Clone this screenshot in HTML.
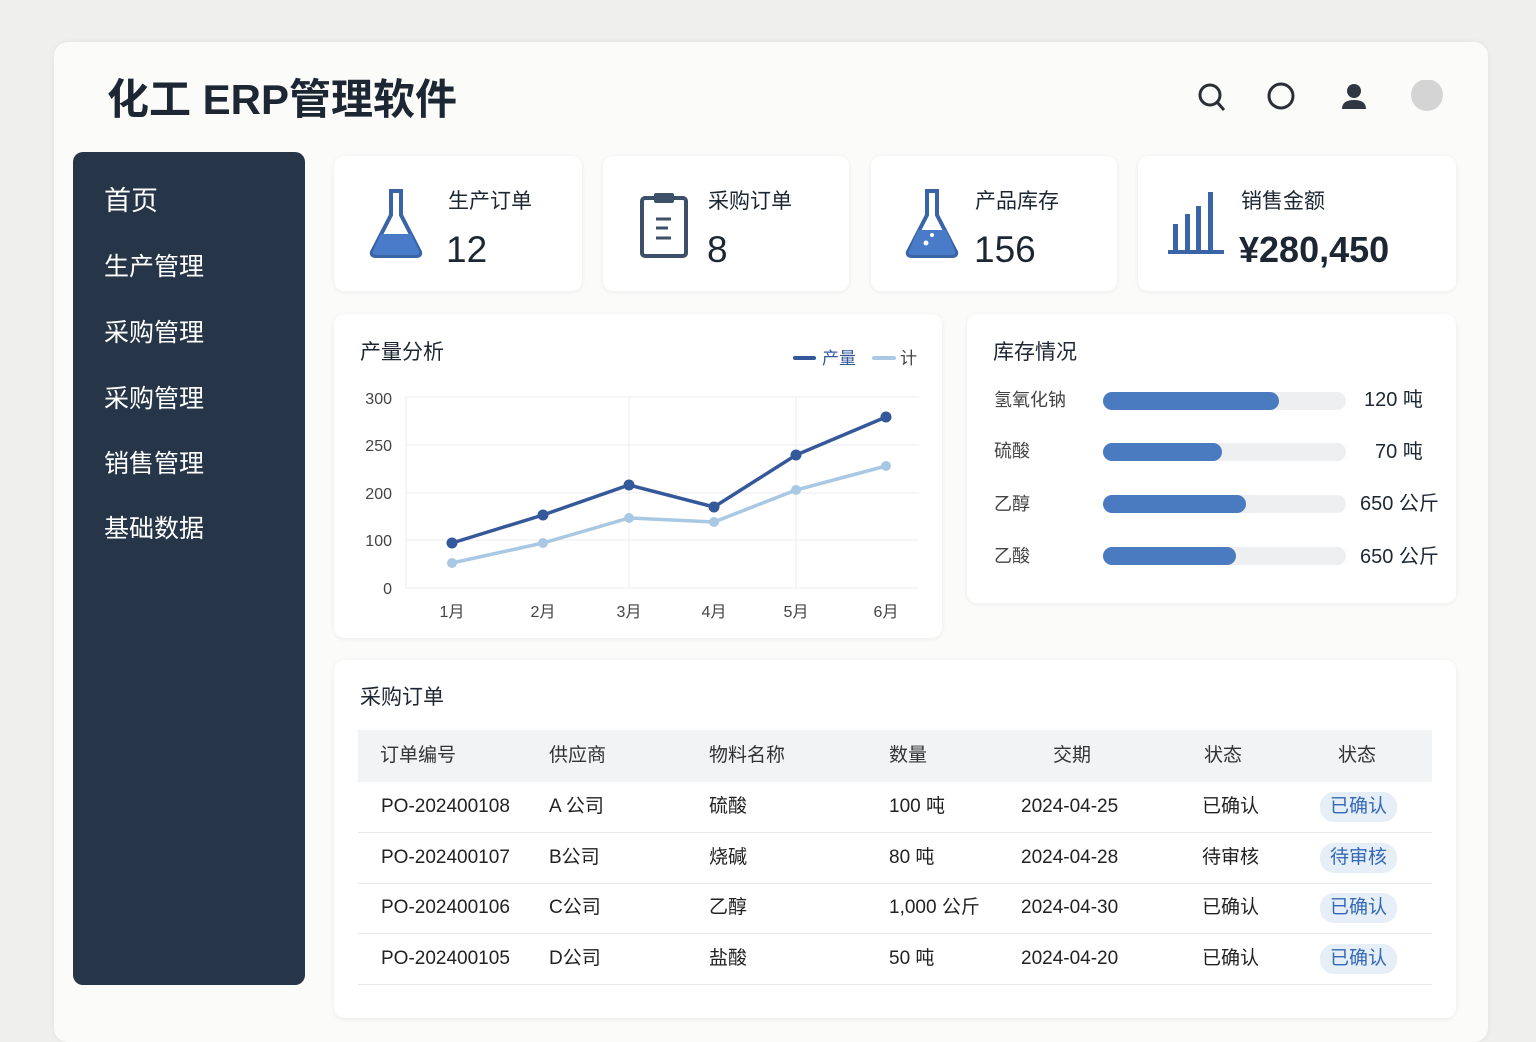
<!DOCTYPE html>
<html><head><meta charset="utf-8"><style>
*{margin:0;padding:0;box-sizing:border-box}
body{width:1536px;height:1024px;background:#efefee;font-family:"Liberation Sans","Noto Sans CJK SC",sans-serif;color:#1d2733;position:relative;overflow:hidden}
.main{position:absolute;left:54px;top:42px;width:1434px;height:1000px;background:#fbfbfa;border-radius:14px;box-shadow:0 0 6px rgba(0,0,0,.06)}
.abs{position:absolute}
.title{left:107px;top:74px;font-size:42px;font-weight:bold;color:#1c2733;line-height:52px}
.side{left:73px;top:152px;width:232px;height:833px;background:#263547;border-radius:10px}
.side div{position:absolute;left:31px;color:#fff;font-size:25px;line-height:30px}
.card{position:absolute;background:#fff;border-radius:10px;box-shadow:0 1px 5px rgba(0,0,0,.07)}
.lbl{font-size:21px;color:#1d2733;line-height:26px}
.num{font-size:37px;color:#1d2733;line-height:44px}
table{border-collapse:collapse;position:absolute;left:358px;top:730px;width:1074px;font-size:19px}
th{height:52px;background:#f2f3f4;font-weight:normal;text-align:left;color:#333;line-height:22px}
td{height:50.5px;border-bottom:1px solid #e6e8ea;color:#222;line-height:22px;vertical-align:middle}
.badge{display:inline-block;background:#e6eef8;color:#3469b4;border-radius:14px;padding:4px 10px}
.bar{position:absolute;left:1103px;height:18px;width:243px;background:#eeeff1;border-radius:9px}
.bar i{display:block;height:18px;background:#4a7bc0;border-radius:9px}
</style></head><body>
<div class="main"></div>
<div class="abs title">化工 ERP管理软件</div>
<svg class="abs" style="left:1195px;top:80px" width="260" height="36">
<circle cx="15" cy="15" r="10" fill="none" stroke="#2a2f36" stroke-width="3"/><line x1="22" y1="22" x2="29" y2="30" stroke="#2a2f36" stroke-width="3"/>
<circle cx="86" cy="16" r="12" fill="none" stroke="#2a2f36" stroke-width="3"/>
<circle cx="159" cy="11" r="7" fill="#2e3742"/><path d="M147 29 q0-9 12-9 q12 0 12 9 v0 h-24z" fill="#2e3742"/>
<circle cx="232" cy="15" r="16" fill="#d4d4d4"/>
</svg>
<div class="abs side">
<div style="top:34px;font-size:27px">首页</div>
<div style="top:100px">生产管理</div>
<div style="top:166px">采购管理</div>
<div style="top:232px">采购管理</div>
<div style="top:297px">销售管理</div>
<div style="top:362px">基础数据</div>
</div>
<div class="card" style="left:334px;top:156px;width:248px;height:135px"></div>
<div class="card" style="left:603px;top:156px;width:246px;height:135px"></div>
<div class="card" style="left:871px;top:156px;width:246px;height:135px"></div>
<div class="card" style="left:1138px;top:156px;width:318px;height:135px"></div>
<svg class="abs" style="left:366px;top:188px" width="64" height="72"><path d="M23 3h14M25 3v24L6 64q-1 4 4 4h40q5 0 4-4L35 27V3" fill="#fff" stroke="#3a64a8" stroke-width="4"/><path d="M15 46h30l8 17q1 4-3 4H10q-4 0-3-4z" fill="#4a7bc8"/></svg>
<svg class="abs" style="left:639px;top:190px" width="52" height="70"><rect x="3" y="8" width="44" height="58" rx="3" fill="#fff" stroke="#3c5068" stroke-width="4"/><rect x="15" y="3" width="20" height="10" rx="2" fill="#3c5068"/><path d="M17 29h15M17 38h12M17 48h15" stroke="#3c5068" stroke-width="3"/></svg>
<svg class="abs" style="left:902px;top:188px" width="64" height="72"><path d="M23 3h14M25 3v24L6 64q-1 4 4 4h40q5 0 4-4L35 27V3" fill="#fff" stroke="#3a64a8" stroke-width="4"/><path d="M16 42h28l9 21q1 4-3 4H10q-4 0-3-4z" fill="#4a7bc8"/><circle cx="24" cy="55" r="2.5" fill="#fff"/><circle cx="30" cy="47" r="2" fill="#fff"/></svg>
<svg class="abs" style="left:1166px;top:190px" width="60" height="66"><path d="M2 62h56" stroke="#3a64a8" stroke-width="4"/><rect x="7" y="34" width="5" height="26" fill="#3a64a8"/><rect x="19" y="24" width="5" height="36" fill="#3a64a8"/><rect x="30" y="16" width="5" height="44" fill="#3a64a8"/><rect x="42" y="2" width="5" height="58" fill="#3a64a8"/></svg>
<div class="abs lbl" style="left:448px;top:189px">生产订单</div><div class="abs num" style="left:446px;top:228px">12</div>
<div class="abs lbl" style="left:708px;top:189px">采购订单</div><div class="abs num" style="left:707px;top:228px">8</div>
<div class="abs lbl" style="left:975px;top:189px">产品库存</div><div class="abs num" style="left:974px;top:228px">156</div>
<div class="abs lbl" style="left:1241px;top:189px">销售金额</div><div class="abs num" style="left:1239px;top:228px;font-weight:bold;font-size:36px">¥280,450</div>
<div class="card" style="left:334px;top:314px;width:608px;height:324px"></div>
<div class="abs" style="left:360px;top:340px;font-size:21px;line-height:26px">产量分析</div>
<svg class="abs" style="left:334px;top:314px" width="608" height="324" font-family="Liberation Sans, Noto Sans CJK SC, sans-serif" font-size="16" fill="#444">
<line x1="461" y1="44" x2="480" y2="44" stroke="#34589a" stroke-width="4" stroke-linecap="round"/><text x="488" y="50" fill="#34589a" font-size="17">产量</text>
<line x1="540" y1="44" x2="560" y2="44" stroke="#a9c8e4" stroke-width="4" stroke-linecap="round"/><text x="566" y="50" font-size="17">计</text>
<g stroke="#eceef0"><line x1="72" y1="83" x2="585" y2="83"/><line x1="72" y1="131" x2="585" y2="131"/><line x1="72" y1="179" x2="585" y2="179"/><line x1="72" y1="226" x2="585" y2="226"/><line x1="72" y1="274" x2="585" y2="274"/><line x1="72" y1="83" x2="72" y2="274"/><line x1="295" y1="83" x2="295" y2="274"/><line x1="462" y1="83" x2="462" y2="274"/></g>
<g text-anchor="end"><text x="58" y="90">300</text><text x="58" y="137">250</text><text x="58" y="185">200</text><text x="58" y="232">100</text><text x="58" y="280">0</text></g>
<g text-anchor="middle"><text x="118" y="303">1月</text><text x="209" y="303">2月</text><text x="295" y="303">3月</text><text x="380" y="303">4月</text><text x="462" y="303">5月</text><text x="552" y="303">6月</text></g>
<polyline points="118,249 209,229 295,204 380,208 462,176 552,152" fill="none" stroke="#a9c8e4" stroke-width="3.5"/>
<g fill="#a9c8e4"><circle cx="118" cy="249" r="5"/><circle cx="209" cy="229" r="5"/><circle cx="295" cy="204" r="5"/><circle cx="380" cy="208" r="5"/><circle cx="462" cy="176" r="5"/><circle cx="552" cy="152" r="5"/></g>
<polyline points="118,229 209,201 295,171 380,193 462,141 552,103" fill="none" stroke="#34589a" stroke-width="3.5"/>
<g fill="#34589a"><circle cx="118" cy="229" r="5.5"/><circle cx="209" cy="201" r="5.5"/><circle cx="295" cy="171" r="5.5"/><circle cx="380" cy="193" r="5.5"/><circle cx="462" cy="141" r="5.5"/><circle cx="552" cy="103" r="5.5"/></g>
</svg>
<div class="card" style="left:967px;top:314px;width:489px;height:289px"></div>
<div class="abs" style="left:993px;top:340px;font-size:21px;line-height:26px">库存情况</div>
<div class="abs" style="left:994px;top:389px;font-size:18px;color:#444;line-height:22px">氢氧化钠</div>
<div class="abs" style="left:994px;top:440px;font-size:18px;color:#444;line-height:22px">硫酸</div>
<div class="abs" style="left:994px;top:493px;font-size:18px;color:#444;line-height:22px">乙醇</div>
<div class="abs" style="left:994px;top:545px;font-size:18px;color:#444;line-height:22px">乙酸</div>
<div class="bar" style="top:392px"><i style="width:176px"></i></div>
<div class="bar" style="top:443px"><i style="width:119px"></i></div>
<div class="bar" style="top:495px"><i style="width:143px"></i></div>
<div class="bar" style="top:547px"><i style="width:133px"></i></div>
<div class="abs" style="left:1364px;top:388px;font-size:20px;line-height:24px">120 吨</div>
<div class="abs" style="left:1375px;top:440px;font-size:20px;line-height:24px">70 吨</div>
<div class="abs" style="left:1360px;top:492px;font-size:20px;line-height:24px">650 公斤</div>
<div class="abs" style="left:1360px;top:545px;font-size:20px;line-height:24px">650 公斤</div>
<div class="card" style="left:334px;top:660px;width:1122px;height:358px"></div>
<div class="abs" style="left:360px;top:685px;font-size:21px;line-height:26px">采购订单</div>
<table>
<colgroup><col style="width:191px"><col style="width:160px"><col style="width:180px"><col style="width:132px"><col style="width:181px"><col style="width:118px"><col></colgroup>
<tr><th style="padding-left:22px">订单编号</th><th>供应商</th><th>物料名称</th><th>数量</th><th style="padding-left:32px">交期</th><th style="padding-left:2px">状态</th><th style="padding-left:18px">状态</th></tr>
<tr><td style="padding-left:23px">PO-202400108</td><td>A 公司</td><td>硫酸</td><td>100 吨</td><td>2024-04-25</td><td>已确认</td><td><span class="badge">已确认</span></td></tr>
<tr><td style="padding-left:23px">PO-202400107</td><td>B公司</td><td>烧碱</td><td>80 吨</td><td>2024-04-28</td><td>待审核</td><td><span class="badge">待审核</span></td></tr>
<tr><td style="padding-left:23px">PO-202400106</td><td>C公司</td><td>乙醇</td><td>1,000 公斤</td><td>2024-04-30</td><td>已确认</td><td><span class="badge">已确认</span></td></tr>
<tr><td style="padding-left:23px">PO-202400105</td><td>D公司</td><td>盐酸</td><td>50 吨</td><td>2024-04-20</td><td>已确认</td><td><span class="badge">已确认</span></td></tr>
</table>
</body></html>
